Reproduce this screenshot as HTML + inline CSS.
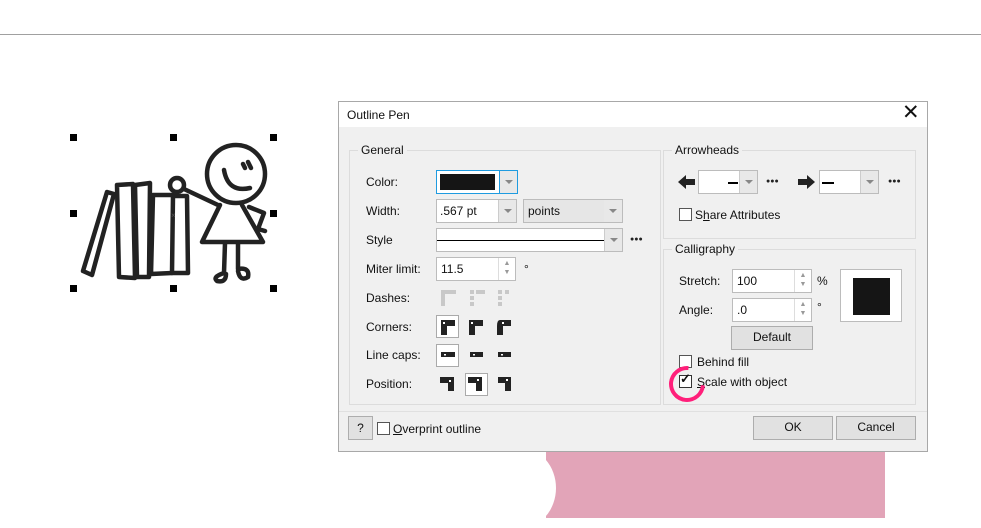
<!DOCTYPE html>
<html><head><meta charset="utf-8"><style>
*{box-sizing:border-box;margin:0;padding:0}
body{width:981px;height:518px;background:#fff;position:relative;overflow:hidden;font-family:"Liberation Sans",sans-serif;font-size:12px;color:#111}
.a{position:absolute}
.grp{position:absolute;border:1px solid #dcdcdc}
.gl{position:absolute;background:#f0f0f0;padding:0 3px;top:-8px;left:8px;font-size:12px}
.fld{position:absolute;background:#fff;border:1px solid #bcbcbc}
.dd{position:absolute;right:0;top:0;bottom:0;width:18px;background:#e8e8e8;border-left:1px solid #ccc}
.dd:after{content:"";position:absolute;left:5px;top:9px;border:4px solid transparent;border-top:4px solid #888}
.btn{position:absolute;background:#e1e1e1;border:1px solid #adadad;text-align:center;line-height:21px}
.cb{position:absolute;width:13px;height:13px;background:#fff;border:1px solid #333}
.spin{position:absolute;right:0;top:0;bottom:0;width:17px;border-left:1px solid #ddd;color:#999;font-size:7px;text-align:center;line-height:9px;padding-top:1px}
.ico{position:absolute;width:22px;height:22px}
.sel{border:1px solid #aaa;background:#fff}
.dots{position:absolute;font-size:7px;letter-spacing:0px;color:#222}
</style></head><body>
<div class="a" style="left:0;top:34px;width:981px;height:1px;background:#a0a0a0"></div>
<div class="a" style="left:546px;top:451px;width:339px;height:67px;background:#e2a4b8"></div>
<div class="a" style="left:486px;top:448px;width:70px;height:80px;border-radius:50%;background:#fff"></div>

<svg class="a" style="left:60px;top:125px" width="230" height="175" viewBox="0 0 230 175">
<g fill="#000"><rect x="10" y="9" width="7" height="7"/><rect x="110" y="9" width="7" height="7"/><rect x="210" y="9" width="7" height="7"/>
<rect x="10" y="85" width="7" height="7"/><rect x="210" y="85" width="7" height="7"/>
<rect x="10" y="160" width="7" height="7"/><rect x="110" y="160" width="7" height="7"/><rect x="210" y="160" width="7" height="7"/></g>
<g fill="none" stroke="#222" stroke-width="4.5" stroke-linejoin="round" stroke-linecap="round">
<path d="M47 67 L54 69 L32 150 L23 146 Z"/>
<path d="M57 60 L73 59 L75 153 L59 152 Z"/>
<path d="M75 60 L90 58 L89 152 L77 152 Z"/>
<path d="M93 70 L113 70 L112 148 L91 149 Z"/>
<path d="M113 71 L127 71 L128 148 L112 148"/>
<circle cx="117" cy="60" r="7"/>
<path d="M124 64 L158 80"/>
<circle cx="176" cy="49" r="29"/>
<path d="M164 45 Q168 68 190 63"/>
<path d="M183 39 L185 43 M188 37 L191 43"/>
<path d="M160 80 L142 117 L203 117 L182 80"/>
<path d="M189 82 L204 88 L198 104 L205 106"/>
<path d="M165 118 L164 148 Q152 152 157 156 Q166 158 166 149"/>
<path d="M178 118 L178 144 Q190 142 188 152 Q180 157 178 146"/>
</g>
<text x="111" y="93" font-size="8" fill="#555">×</text>
</svg>

<div class="a" style="left:338px;top:101px;width:590px;height:351px;border:1px solid #a8a8a8;background:#f0f0f0"></div>
<div class="a" style="left:339px;top:102px;width:588px;height:25px;background:#fff"></div>
<div class="a" style="left:347px;top:108px">Outline Pen</div>
<div class="a" style="left:902px;top:100px;font-size:21px">✕</div>

<div class="grp" style="left:349px;top:150px;width:312px;height:255px"><span class="gl">General</span></div>
<div class="a" style="left:366px;top:175px">Color:</div>
<div class="a" style="left:366px;top:204px">Width:</div>
<div class="a" style="left:366px;top:233px">Style</div>
<div class="a" style="left:366px;top:262px">Miter limit:</div>
<div class="a" style="left:366px;top:291px">Dashes:</div>
<div class="a" style="left:366px;top:320px">Corners:</div>
<div class="a" style="left:366px;top:348px">Line caps:</div>
<div class="a" style="left:366px;top:377px">Position:</div>

<div class="fld" style="left:436px;top:170px;width:82px;height:24px;border-color:#1e9be0"><div class="a" style="left:3px;top:3px;width:55px;height:16px;background:#151515"></div><div class="dd" style="border-left-color:#1e9be0"></div></div>
<div class="fld" style="left:436px;top:199px;width:81px;height:24px"><span class="a" style="left:3px;top:4px">.567 pt</span><div class="dd"></div></div>
<div class="fld" style="left:523px;top:199px;width:100px;height:24px;background:#e6e6e6"><span class="a" style="left:4px;top:4px">points</span><div class="dd" style="border:none"></div></div>
<div class="fld" style="left:436px;top:228px;width:187px;height:24px"><div class="a" style="left:0;top:11px;width:167px;height:1px;background:#000"></div><div class="dd"></div></div>
<div class="dots" style="left:630px;top:236px">●●●</div>
<div class="fld" style="left:436px;top:257px;width:80px;height:24px"><span class="a" style="left:4px;top:4px">11.5</span><div class="spin">▲<br>▼</div></div>
<div class="a" style="left:524px;top:262px">°</div>

<svg class="a" style="left:438px;top:288px" width="80" height="20"><g fill="#c8c8c8"><rect x="3" y="2" width="15" height="4"/><rect x="3" y="6" width="4" height="12"/><rect x="32" y="2" width="4" height="4"/><rect x="38" y="2" width="9" height="4"/><rect x="32" y="8" width="4" height="4"/><rect x="32" y="14" width="4" height="4"/><rect x="60" y="2" width="4" height="4"/><rect x="67" y="2" width="4" height="4"/><rect x="60" y="8" width="4" height="4"/><rect x="60" y="14" width="4" height="4"/></g></svg>
<div class="ico sel" style="left:436px;top:315px;width:23px;height:23px"></div>
<div class="ico sel" style="left:436px;top:344px;width:23px;height:23px"></div>
<div class="ico sel" style="left:465px;top:373px;width:23px;height:23px"></div>
<svg class="a" style="left:436px;top:315px" width="80" height="82"><g fill="#222">
<path d="M5 5h14v6h-8v9h-6z"/><path d="M33 5h14v6h-8v9h-6z"/><path d="M64 5h11v6h-8v9h-6v-9q0-6 3-6z"/>
<rect x="5" y="37" width="14" height="5"/><rect x="34" y="37" width="13" height="5"/><rect x="62" y="37" width="13" height="5"/>
<path d="M4 62h14v14h-6v-8h-8z"/><path d="M32 62h14v14h-6v-8h-8z"/><path d="M62 62h13v14h-6v-8h-7z"/>
</g><g fill="#fff"><rect x="7" y="7" width="2" height="2"/><rect x="35" y="7" width="2" height="2"/><rect x="66" y="7" width="2" height="2"/><rect x="8" y="39" width="2" height="1.5"/><rect x="37" y="39" width="2" height="1.5"/><rect x="65" y="39" width="2" height="1.5"/><rect x="13" y="65" width="2" height="2"/><rect x="41" y="64" width="2" height="2"/><rect x="70" y="64" width="2" height="2"/></g></svg>

<div class="grp" style="left:663px;top:150px;width:253px;height:89px"><span class="gl">Arrowheads</span></div>
<svg class="a" style="left:678px;top:174px" width="18" height="16"><path d="M0 8l8-7v4h9v6h-9v4z" fill="#222"/></svg>
<div class="fld" style="left:698px;top:170px;width:60px;height:24px"><div class="a" style="left:29px;top:11px;width:10px;height:2px;background:#000"></div><div class="dd"></div></div>
<div class="dots" style="left:766px;top:178px">●●●</div>
<svg class="a" style="left:797px;top:174px" width="18" height="16"><path d="M18 8l-8-7v4h-9v6h9v4z" fill="#222"/></svg>
<div class="fld" style="left:819px;top:170px;width:60px;height:24px"><div class="a" style="left:2px;top:11px;width:12px;height:2px;background:#000"></div><div class="dd"></div></div>
<div class="dots" style="left:888px;top:178px">●●●</div>
<div class="cb" style="left:679px;top:208px;border-color:#555"></div>
<div class="a" style="left:695px;top:208px">S<u>h</u>are Attributes</div>

<div class="grp" style="left:663px;top:249px;width:253px;height:156px"><span class="gl">Calligraphy</span></div>
<div class="a" style="left:679px;top:274px">Stretch:</div>
<div class="a" style="left:679px;top:303px">Angle:</div>
<div class="fld" style="left:732px;top:269px;width:80px;height:24px"><span class="a" style="left:4px;top:4px">100</span><div class="spin">▲<br>▼</div></div>
<div class="a" style="left:817px;top:274px">%</div>
<div class="fld" style="left:732px;top:298px;width:80px;height:24px"><span class="a" style="left:4px;top:4px">.0</span><div class="spin">▲<br>▼</div></div>
<div class="a" style="left:817px;top:300px">°</div>
<div class="fld" style="left:840px;top:269px;width:62px;height:53px"><div class="a" style="left:12px;top:8px;width:37px;height:37px;background:#151515"></div></div>
<div class="btn" style="left:731px;top:326px;width:82px;height:24px">Default</div>
<div class="cb" style="left:679px;top:355px;border-color:#555"></div>
<div class="a" style="left:697px;top:355px">Behind fill</div>
<div class="cb" style="left:679px;top:375px"></div>
<div class="a" style="left:680px;top:371px;font-size:13px;font-weight:bold">✓</div>
<div class="a" style="left:697px;top:375px"><u>S</u>cale with object</div>
<div class="a" style="left:669px;top:366px;width:36px;height:36px;border:4px solid #ff1f7a;border-radius:50%;border-top-color:transparent;transform:rotate(50deg)"></div>

<div class="a" style="left:339px;top:411px;width:588px;height:1px;background:#e0e0e0"></div>
<div class="btn" style="left:348px;top:416px;width:25px;height:24px;line-height:22px">?</div>
<div class="cb" style="left:377px;top:422px;border-color:#555"></div>
<div class="a" style="left:393px;top:422px"><u>O</u>verprint outline</div>
<div class="btn" style="left:753px;top:416px;width:80px;height:24px">OK</div>
<div class="btn" style="left:836px;top:416px;width:80px;height:24px">Cancel</div>
</body></html>
